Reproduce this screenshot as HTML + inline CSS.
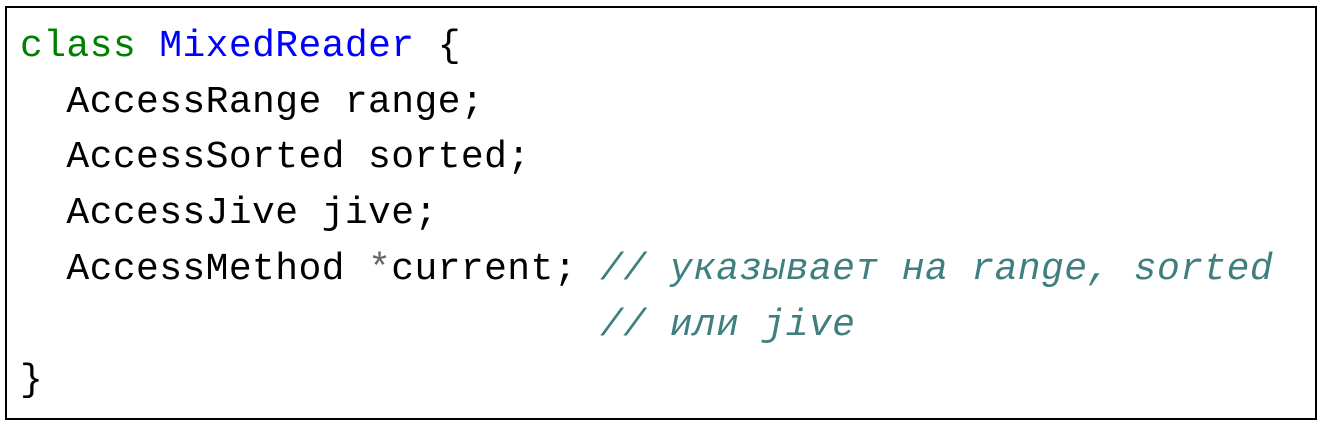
<!DOCTYPE html>
<html><head><meta charset="utf-8"><style>
html,body{margin:0;padding:0;background:#fff;width:1325px;height:428px;overflow:hidden}
.box{position:absolute;left:5px;top:6px;width:1312px;height:414px;border:2px solid #000;box-sizing:border-box}
pre{position:absolute;left:20px;top:19px;margin:0;font-family:"Liberation Mono","DejaVu Sans Mono",monospace;font-size:38px;line-height:55.7px;color:#000;letter-spacing:0.4px}
.k{color:#008000}.n{color:#0000ff}.c{color:#3f7f7f;font-style:italic}.g{color:#666}
</style></head><body>
<div class="box"></div>
<pre><span class="k">class</span> <span class="n">MixedReader</span> {
  AccessRange range;
  AccessSorted sorted;
  AccessJive jive;
  AccessMethod <span class="g">*</span>current; <span class="c">// указывает на range, sorted</span>
                         <span class="c">// или jive</span>
}</pre>
</body></html>
